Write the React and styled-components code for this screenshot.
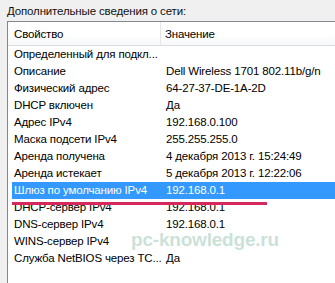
import React from "react";
import styled, { createGlobalStyle } from "styled-components";

const Global = createGlobalStyle`
  html, body { margin: 0; padding: 0; }
  body {
    background: #f0f0f0;
    font-family: "Liberation Sans", Arial, sans-serif;
    font-size: 11.5px;
    letter-spacing: -0.15px;
    color: #000;
  }
`;

const Page = styled.div`
  position: relative;
  width: 335px;
  height: 283px;
  overflow: hidden;
  display: flex;
  flex-direction: column;
  background: #f0f0f0;
`;

const Title = styled.div`
  height: 21px;
  padding-left: 7px;
  line-height: 22px;
  white-space: nowrap;
  color: #111;
`;

const ListBox = styled.div`
  flex: 1;
  margin-left: 7px;
  background: #fff;
  border-top: 1px solid #828790;
  border-left: 1px solid #828790;
  display: flex;
  flex-direction: column;
`;

const Header = styled.div`
  height: 23px;
  display: grid;
  grid-template-columns: 153px 1fr;
  background: linear-gradient(#ffffff, #ffffff 50%, #f7f8fa);
  border-bottom: 1px solid #dcdcdc;
`;

const HeaderCell = styled.div`
  display: flex;
  align-items: center;
  padding-left: ${(p) => (p.$first ? "6px" : "4px")};
  border-right: ${(p) => (p.$first ? "1px solid #e3e5e7" : "none")};
  white-space: nowrap;
`;

const Rows = styled.div`
  display: flex;
  flex-direction: column;
  padding-left: 4px;
`;

const Row = styled.div`
  height: 17px;
  display: grid;
  grid-template-columns: 149px 1fr;
  align-items: center;
  background: ${(p) => (p.$selected ? "#3399ff" : "transparent")};
  color: ${(p) => (p.$selected ? "#fff" : "#000")};
  white-space: nowrap;
`;

const Cell = styled.div`
  padding-left: ${(p) => (p.$first ? "2px" : "5px")};
  overflow: hidden;
  line-height: 17px;
`;

const Underline = styled.div`
  position: absolute;
  left: 12px;
  top: 202px;
  width: 255px;
  height: 3px;
  background: #d7285e;
`;

const Watermark = styled.div`
  position: absolute;
  left: 131px;
  top: 229px;
  font-family: "Liberation Sans", Arial, sans-serif;
  font-weight: bold;
  font-size: 19px;
  letter-spacing: -0.2px;
  color: rgba(150, 196, 178, 0.5);
  white-space: nowrap;
`;

const rows = [
  ["Определенный для подкл...", ""],
  ["Описание", "Dell Wireless 1701 802.11b/g/n"],
  ["Физический адрес", "64-27-37-DE-1A-2D"],
  ["DHCP включен", "Да"],
  ["Адрес IPv4", "192.168.0.100"],
  ["Маска подсети IPv4", "255.255.255.0"],
  ["Аренда получена", "4 декабря 2013 г. 15:24:49"],
  ["Аренда истекает", "5 декабря 2013 г. 12:22:06"],
  ["Шлюз по умолчанию IPv4", "192.168.0.1", true],
  ["DHCP-сервер IPv4", "192.168.0.1"],
  ["DNS-сервер IPv4", "192.168.0.1"],
  ["WINS-сервер IPv4", ""],
  ["Служба NetBIOS через TC...", "Да"],
];

export default function App() {
  return (
    <Page>
      <Global />
      <Title>Дополнительные сведения о сети:</Title>
      <ListBox>
        <Header>
          <HeaderCell $first>Свойство</HeaderCell>
          <HeaderCell>Значение</HeaderCell>
        </Header>
        <Rows>
          {rows.map(([k, v, sel], i) => (
            <Row key={i} $selected={sel}>
              <Cell $first>{k}</Cell>
              <Cell>{v}</Cell>
            </Row>
          ))}
        </Rows>
      </ListBox>
      <Underline />
      <Watermark>pc-knowledge.ru</Watermark>
    </Page>
  );
}
